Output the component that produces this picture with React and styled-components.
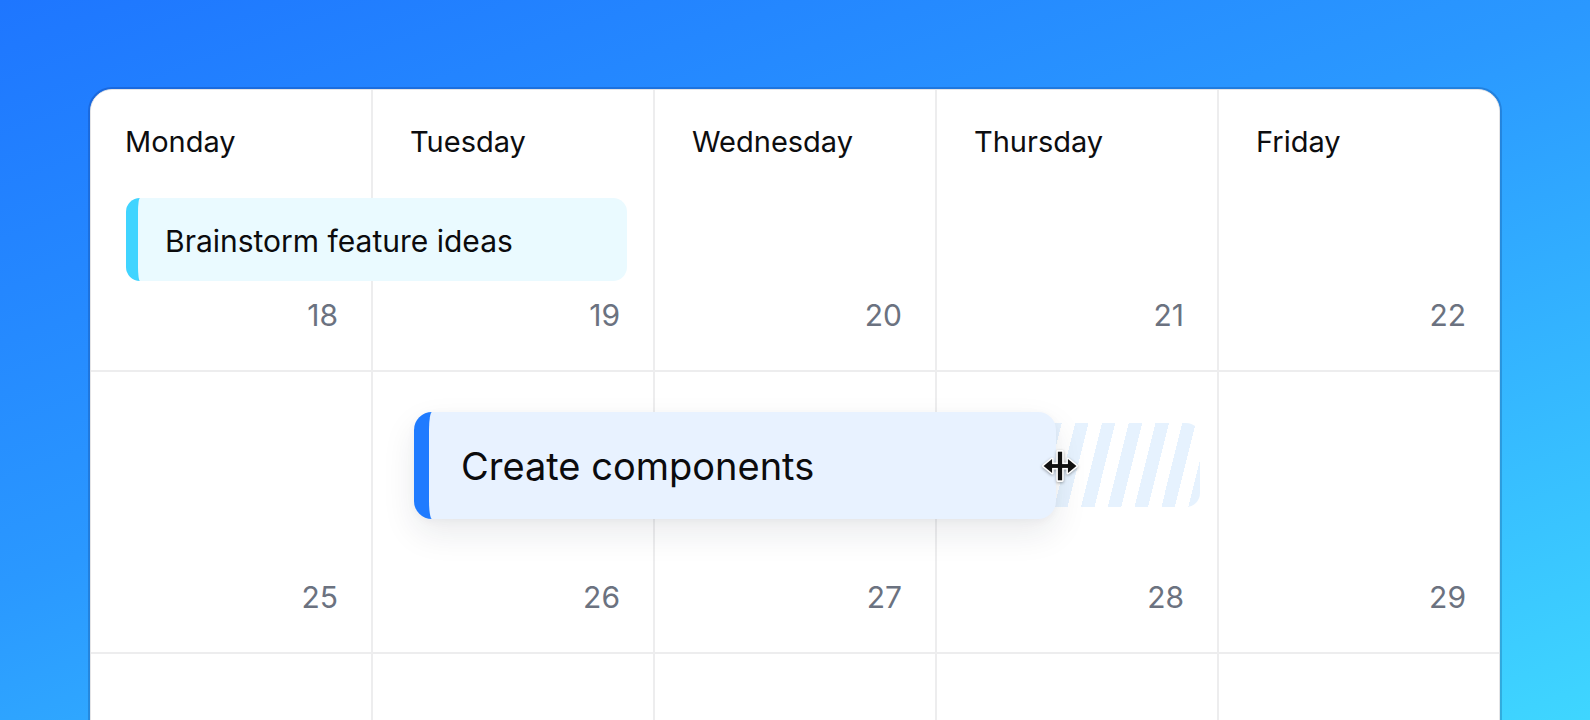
import React from "react";
import styled, { createGlobalStyle } from "styled-components";

const Global = createGlobalStyle`
  html, body { margin: 0; padding: 0; }
  body {
    font-family: Inter, "Noto Sans", "Liberation Sans", sans-serif;
    -webkit-font-smoothing: antialiased;
  }
`;

const Page = styled.div`
  height: 720px;
  overflow: hidden;
  background: linear-gradient(160deg, #1e76ff 0%, #2a98ff 45%, #3fd6ff 100%);
  padding-top: 89px;
  box-sizing: border-box;
`;

const Card = styled.div`
  width: 1410px;
  margin: 0 auto;
  box-sizing: border-box;
  background: #fff;
  border: 1px solid #e4e4e6;
  border-radius: 22px;
  box-shadow: 0 0 0 2px rgba(0, 25, 90, 0.2);
  overflow: hidden;
  height: 900px;
`;

const Grid = styled.div`
  display: grid;
  grid-template-columns: repeat(5, 280px);
  grid-auto-rows: 280px;
  gap: 2px;
  background: #ededee;
`;

const Cell = styled.div`
  grid-column: ${(p) => p.$col};
  grid-row: ${(p) => p.$row};
  background: #fff;
  display: flex;
  flex-direction: column;
  padding: 34px 33px 37px ${(p) => (p.$col === 1 ? 34 : 37)}px;
  box-sizing: border-box;
`;

const DayName = styled.div`
  font-size: 29px;
  line-height: 36px;
  color: #0d0d0f;
  font-weight: 400;
`;

const DateNum = styled.div`
  margin-top: auto;
  align-self: flex-end;
  font-size: 30px;
  line-height: 36px;
  color: #6b7280;
`;

const Event = styled.div`
  grid-column: ${(p) => p.$col};
  grid-row: ${(p) => p.$row};
  align-self: start;
  justify-self: start;
  position: relative;
  z-index: 2;
  box-sizing: border-box;
  display: flex;
  align-items: center;
  color: #0b0b0d;
`;

const SmallEvent = styled(Event)`
  margin: 108px 0 0 35px;
  width: 501px;
  height: 83px;
  background: #eafaff;
  border-left: 12px solid #40d4ff;
  border-radius: 14px;
  padding-left: 27px;
  padding-top: 3px;
  font-size: 30px;
`;

const DragEvent = styled(Event)`
  margin: 40px 0 0 41px;
  width: 642px;
  height: 107px;
  background: #e8f2ff;
  border-left: 15px solid #1f7bff;
  border-radius: 18px;
  padding-left: 32px;
  font-size: 38px;
  box-shadow: 0 14px 34px rgba(20, 30, 60, 0.09), 0 2px 8px rgba(20, 30, 60, 0.04);
`;

const Ghost = styled.div`
  grid-column: 3 / span 2;
  grid-row: 2;
  align-self: start;
  justify-self: end;
  z-index: 1;
  margin: 51px 17px 0 0;
  width: 500px;
  height: 84px;
  border-radius: 14px;
  background: repeating-linear-gradient(
    104deg,
    #e6f2fe 0px,
    #e6f2fe 13px,
    #ffffff 13px,
    #ffffff 26px
  );
`;

const Cursor = styled.svg`
  position: absolute;
  right: -22px;
  top: 50%;
  transform: translateY(-50%);
  width: 36px;
  height: 36px;
  filter: drop-shadow(0 1px 1.5px rgba(0, 0, 0, 0.35));
`;

function MoveCursor() {
  const shape = (
    <>
      <rect x="15" y="3.5" width="4" height="27" />
      <rect x="7" y="15.2" width="20" height="3.6" />
      <polygon points="1.5,17 9.5,10.5 9.5,23.5" />
      <polygon points="32.5,17 24.5,10.5 24.5,23.5" />
    </>
  );
  return (
    <Cursor viewBox="0 0 34 34">
      <g fill="#fff" stroke="#fff" strokeWidth="3" strokeLinejoin="round">
        {shape}
      </g>
      <g fill="#111">{shape}</g>
    </Cursor>
  );
}

const days = ["Monday", "Tuesday", "Wednesday", "Thursday", "Friday"];
const rows = [
  [18, 19, 20, 21, 22],
  [25, 26, 27, 28, 29],
  [null, null, null, null, null],
];

export default function App() {
  return (
    <>
      <Global />
      <Page>
        <Card>
          <Grid>
            {rows.map((r, ri) =>
              r.map((d, ci) => (
                <Cell key={`${ri}-${ci}`} $row={ri + 1} $col={ci + 1}>
                  {ri === 0 && <DayName>{days[ci]}</DayName>}
                  {d !== null && <DateNum>{d}</DateNum>}
                </Cell>
              ))
            )}
            <SmallEvent $row={1} $col="1 / span 2">
              Brainstorm feature ideas
            </SmallEvent>
            <Ghost />
            <DragEvent $row={2} $col="2 / span 3">
              Create components
              <MoveCursor />
            </DragEvent>
          </Grid>
        </Card>
      </Page>
    </>
  );
}
